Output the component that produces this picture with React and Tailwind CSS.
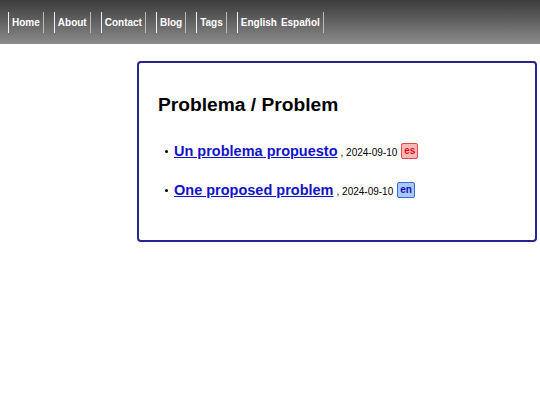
const navItems = [['Home'], ['About'], ['Contact'], ['Blog'], ['Tags'], ['English', 'Español']];

const posts = [
  { title: 'Un problema propuesto', date: '2024-09-10', lang: 'es' },
  { title: 'One proposed problem', date: '2024-09-10', lang: 'en' },
];

function LangBadge({ lang }) {
  const cls =
    lang === 'es'
      ? 'bg-[#ffb8b8] border-[#e04848] text-[#e01010]'
      : 'bg-[#a8c8ff] border-[#3a6ad0] text-[#1010b0]';
  return (
    <span className={`ml-[4px] inline-flex h-[16px] items-center rounded-[2px] border px-[2px] text-[10px] font-bold leading-none ${cls}`}>
      {lang}
    </span>
  );
}

export default function App() {
  return (
    <div className="min-h-[405px] bg-white font-['Liberation_Sans',Arial,sans-serif] text-black">
      {/* Header */}
      <header className="h-[44px] bg-gradient-to-b from-[#3c3c3c] to-[#8c8c8c] pl-[8px] pt-[12px]">
        <nav className="flex items-start gap-[10px]">
          {navItems.map((group) => (
            <div
              key={group[0]}
              className="flex h-[21px] items-center gap-[4px] border-l-[1.5px] border-r-[1.5px] border-l-[#f0f0f0] border-r-[#bcbcbc] px-[3px] text-[10px] font-bold text-white"
            >
              {group.map((label) => (
                <a key={label} href="#">{label}</a>
              ))}
            </div>
          ))}
        </nav>
      </header>

      {/* Card */}
      <main className="ml-[137px] mt-[17px] w-[400px]">
        <section className="h-[181px] rounded-[4px] border-2 border-[#26268c] pl-[19px] pt-[31px]">
          <h2 className="text-[19.2px] font-bold leading-[22px]">Problema / Problem</h2>
          <ul className="mt-[25px] flex flex-col gap-[19px] pl-[7px]">
            {posts.map((p) => (
              <li key={p.title} className="flex h-[20px] items-center">
                <span className="mr-[6px] h-[3px] w-[3px] rounded-full bg-black" />
                <span className="flex items-baseline">
                  <a href="#" className="text-[14.5px] font-bold leading-[20px] text-[#1212c8] underline">
                    {p.title}
                  </a>
                  <span className="ml-[3px] text-[10px]">, {p.date}</span>
                </span>
                <LangBadge lang={p.lang} />
              </li>
            ))}
          </ul>
        </section>
      </main>
    </div>
  );
}
